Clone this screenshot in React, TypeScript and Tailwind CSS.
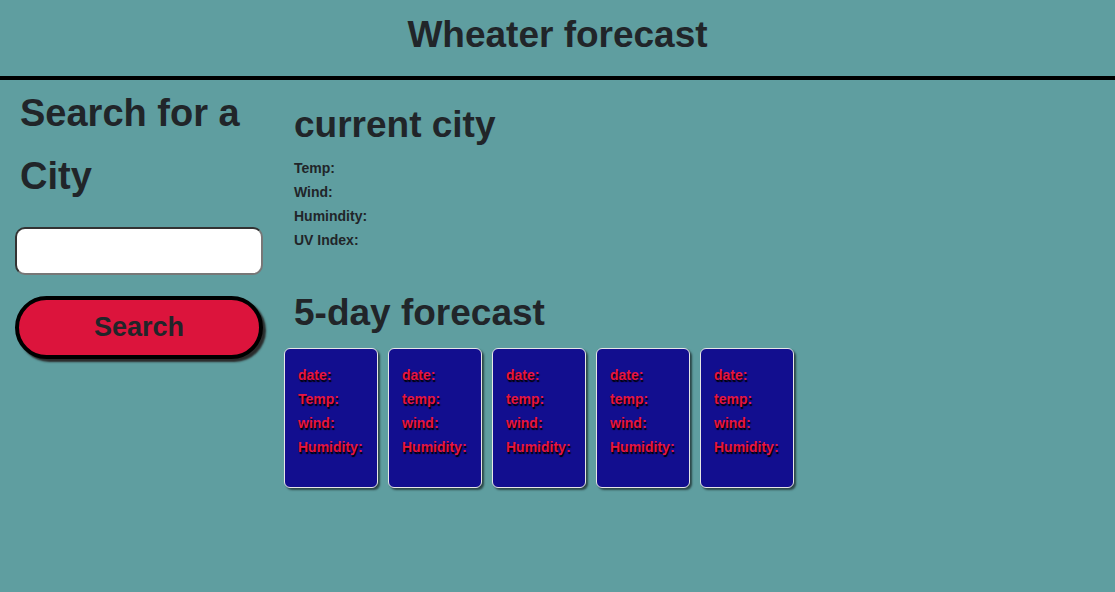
import React from 'react';

const days = [
  { temp: 'Temp:' },
  { temp: 'temp:' },
  { temp: 'temp:' },
  { temp: 'temp:' },
  { temp: 'temp:' },
];

const DayCard = ({ temp }: { temp: string }) => (
  <div className="w-[94px] h-[140px] shrink-0 bg-[#120e8f] border border-[#e6e6e6] rounded-[6px] shadow-[2px_2px_2px_rgba(0,0,0,0.55)] pt-[14px] pl-[13px] text-[14px] leading-[24px] font-bold text-[#e8143e] [text-shadow:1px_2px_1px_#000]">
    <p>date:</p>
    <p>{temp}</p>
    <p>wind:</p>
    <p>Humidity:</p>
  </div>
);

export default function App() {
  return (
    <div className="min-h-[592px] bg-[#5f9ea0] text-[#212529] font-['Liberation_Sans',Arial,sans-serif]">
      <header className="h-[80px] border-b-4 border-black flex items-center justify-center pb-[6px]">
        <h1 className="text-[37px] font-bold leading-[1.2]">Wheater forecast</h1>
      </header>

      <div className="flex">
        <aside className="w-[279px] shrink-0 px-[15px]">
          <h2 className="pl-[5px] pt-[2px] text-[38px] font-bold leading-[63px]">Search for a City</h2>
          <input
            type="text"
            className="mt-[19px] w-[248px] h-[48px] bg-white rounded-[10px] border-2 border-t-[#333] border-l-[#333] border-r-[#777] border-b-[#777] outline-none px-3"
          />
          <button className="mt-[21px] w-[248px] h-[63px] rounded-full border-4 border-black bg-[#dc143c] shadow-[3px_3px_2px_#2a2a2a] text-[27px] font-bold text-[#212529]">
            Search
          </button>
        </aside>

        <main className="flex-1 pl-[5px]">
          <section className="pl-[10px] pt-[23px]">
            <h2 className="text-[37px] font-bold leading-[1.2]">current city</h2>
            <div className="mt-[9px] text-[14px] font-bold leading-[24px]">
              <p>Temp:</p>
              <p>Wind:</p>
              <p>Humindity:</p>
              <p>UV Index:</p>
            </div>
          </section>

          <section className="mt-[39px]">
            <h2 className="pl-[10px] text-[37px] font-bold leading-[1.2]">5-day forecast</h2>
            <div className="mt-[12px] flex gap-[10px]">
              {days.map((d, i) => (
                <DayCard key={i} temp={d.temp} />
              ))}
            </div>
          </section>
        </main>
      </div>
    </div>
  );
}
